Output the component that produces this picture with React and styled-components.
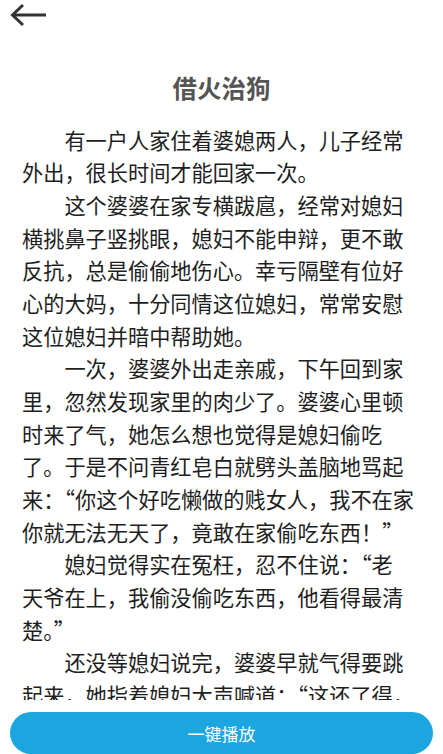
import React from 'react';
import styled, { createGlobalStyle } from 'styled-components';

const GlobalStyle = createGlobalStyle`
  html, body {
    margin: 0;
    padding: 0;
    background: #fff;
  }
  body {
    font-family: "Noto Sans CJK SC", "Noto Sans", sans-serif;
  }
`;

const Page = styled.div`
  height: 100vh;
  display: flex;
  flex-direction: column;
  background: #fff;
  overflow: hidden;
`;

const Header = styled.div`
  height: 34px;
  flex-shrink: 0;
  display: flex;
  align-items: flex-start;
  padding: 3px 0 0 10px;
  box-sizing: border-box;
`;

const BackButton = styled.button`
  border: none;
  background: none;
  padding: 0;
  cursor: pointer;
  display: flex;
`;

const Content = styled.div`
  flex: 1;
  overflow: hidden;
  padding: 0 22px;
`;

const Title = styled.h1`
  margin: 36px 0 0;
  font-size: 24.5px;
  line-height: 36px;
  font-weight: 700;
  color: #555;
  text-align: center;
`;

const Story = styled.div`
  margin-top: 17.7px;
  font-size: 21.2px;
  line-height: 32.65px;
  color: #1e1e1e;
`;

const Paragraph = styled.p`
  margin: 0;
`;

const Line = styled.span`
  display: block;
  white-space: nowrap;
  padding-left: ${p => (p.$indent ? '2em' : '0')};
`;

const Footer = styled.div`
  flex-shrink: 0;
  padding: 12px 10px 0;
`;

const PlayButton = styled.button`
  width: 100%;
  height: 42px;
  border: none;
  border-radius: 21px;
  background: #1ba6df;
  color: #fff;
  font-family: "Noto Sans CJK SC", "Noto Sans", sans-serif;
  font-size: 17px;
  cursor: pointer;
`;

const paragraphs = [
  ['有一户人家住着婆媳两人，儿子经常', '外出，很长时间才能回家一次。'],
  [
    '这个婆婆在家专横跋扈，经常对媳妇',
    '横挑鼻子竖挑眼，媳妇不能申辩，更不敢',
    '反抗，总是偷偷地伤心。幸亏隔壁有位好',
    '心的大妈，十分同情这位媳妇，常常安慰',
    '这位媳妇并暗中帮助她。',
  ],
  [
    '一次，婆婆外出走亲戚，下午回到家',
    '里，忽然发现家里的肉少了。婆婆心里顿',
    '时来了气，她怎么想也觉得是媳妇偷吃',
    '了。于是不问青红皂白就劈头盖脑地骂起',
    '来：“你这个好吃懒做的贱女人，我不在家',
    '你就无法无天了，竟敢在家偷吃东西！”',
  ],
  [
    '媳妇觉得实在冤枉，忍不住说：“老',
    '天爷在上，我偷没偷吃东西，他看得最清',
    '楚。”',
  ],
  [
    '还没等媳妇说完，婆婆早就气得要跳',
    '起来，她指着媳妇大声喊道：“这还了得，',
  ],
];

const BackArrow = () => (
  <svg width="38" height="24" viewBox="0 0 38 24" fill="none" stroke="#333" strokeWidth="3">
    <path d="M2 12H36" />
    <path d="M13 2L2.5 12L13 22" strokeLinejoin="miter" />
  </svg>
);

const App = () => {
  return (
    <Page>
      <GlobalStyle />
      <Header>
        <BackButton aria-label="返回">
          <BackArrow />
        </BackButton>
      </Header>
      <Content>
        <Title>借火治狗</Title>
        <Story>
          {paragraphs.map((lines, i) => (
            <Paragraph key={i}>
              {lines.map((line, j) => (
                <Line key={j} $indent={j === 0}>
                  {line}
                </Line>
              ))}
            </Paragraph>
          ))}
        </Story>
      </Content>
      <Footer>
        <PlayButton>一键播放</PlayButton>
      </Footer>
    </Page>
  );
};

export default App;
